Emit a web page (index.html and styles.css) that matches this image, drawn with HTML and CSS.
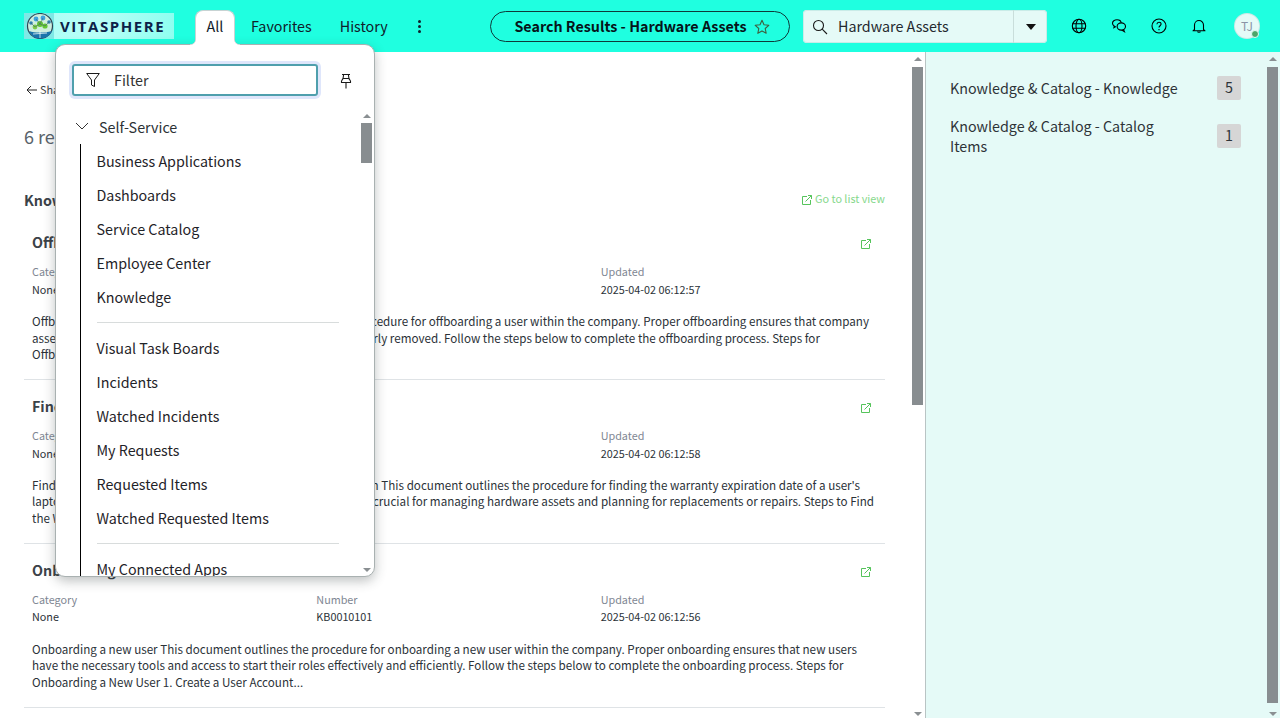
FILE: index.html
```html
<!DOCTYPE html>
<html lang="en">
<head>
<meta charset="utf-8">
<title>Search Results - Hardware Assets</title>
<link rel="stylesheet" href="styles.css">
</head>
<body>
<div class="app">
  <header class="topbar">
    <div class="logo">
      <svg class="logo-mark" width="30" height="26" viewBox="0 0 30 26">
        <rect width="30" height="26" fill="#7fe9e6"/>
        <circle cx="16" cy="13" r="12.5" fill="#cfeede" stroke="#2b4654" stroke-width="1.2"/>
        <path d="M5 18c6 2 15 2 23 0-2 5-7 7.500-12 7.500S7 23 5 18z" fill="#1a74ab"/>
        <path d="M16 18v7M9 21l14-1" stroke="#e8f6f8" stroke-width=".8"/>
        <circle cx="16" cy="11" r="3" fill="#63c734"/>
        <circle cx="21" cy="13" r="2.600" fill="#63c734"/>
        <circle cx="11" cy="14" r="2.400" fill="#7ccc45"/>
        <circle cx="12" cy="6" r="2.400" fill="#3ea3dd"/>
        <circle cx="19" cy="5" r="2.400" fill="#3ea3dd"/>
        <circle cx="7" cy="10" r="1.800" fill="#2f80b0"/>
        <circle cx="25" cy="9" r="1.800" fill="#2f80b0"/>
        <path d="M12 6l4 5 3-6M7 10l4 4 5-3 5 2 4-4" stroke="#45616c" stroke-width=".6" fill="none"/>
      </svg>
      <span class="logo-text">VITASPHERE</span>
    </div>
    <nav class="tabs">
      <a class="tab tab-active">All</a>
      <a class="tab">Favorites</a>
      <a class="tab">History</a>
      <span class="more"><i></i><i></i><i></i></span>
    </nav>
    <div class="pill">
      <span class="pill-text">Search Results - Hardware Assets</span>
      <svg width="16" height="16" viewBox="0 0 16 16"><path d="M8 1.300l2 4.500 4.800.5-3.600 3.200 1 4.800L8 11.900l-4.200 2.400 1-4.800L1.200 6.300 6 5.800z" fill="none" stroke="#3f5f3f" stroke-width="1.100" stroke-linejoin="round"/></svg>
    </div>
    <div class="search">
      <div class="search-field">
        <svg width="16" height="16" viewBox="0 0 16 16"><circle cx="6.500" cy="6.500" r="5" fill="none" stroke="#1a1a1a" stroke-width="1.100"/><path d="M10.200 10.200l4.800 4.800" stroke="#1a1a1a" stroke-width="1.100"/></svg>
        <span class="search-text">Hardware Assets</span>
      </div>
      <div class="search-caret"><b></b></div>
    </div>
    <div class="actions">
      <svg class="action" width="16" height="16" viewBox="0 0 16 16" fill="none" stroke="#000" stroke-width="1.100"><circle cx="8" cy="8" r="6.700"/><ellipse cx="8" cy="8" rx="3" ry="6.700"/><path d="M1.500 5.700h13M1.500 10.300h13"/></svg>
      <svg class="action" width="16" height="16" viewBox="0 0 16 16" fill="none" stroke="#000" stroke-width="1.100"><path d="M6 1.700c-2.500 0-4.500 1.500-4.500 3.500 0 1.200.7 2.200 1.700 2.800l-.3 1.700 2-1.100"/><path d="M6 1.700c2.300 0 4 1.300 4.200 3"/><ellipse cx="10.300" cy="8.500" rx="4.200" ry="3.600"/><path d="M12.500 11.500l.9 2.200-2.700-1.600"/></svg>
      <svg class="action" width="16" height="16" viewBox="0 0 16 16" fill="none" stroke="#000" stroke-width="1.100"><circle cx="8" cy="8" r="7"/><path d="M5.900 6.200C6 4.900 6.900 4.200 8 4.200c1.200 0 2.100.8 2.100 1.900 0 1.700-2.100 1.700-2.100 3.500"/><path d="M8 11v1.200"/></svg>
      <svg class="action" width="16" height="16" viewBox="0 0 16 16" fill="none" stroke="#000" stroke-width="1.100"><path d="M3.500 11.500V7a4.500 4.500 0 0 1 9 0v4.500l1.500 1.300H2z" stroke-linejoin="round"/><path d="M6.500 13.500c.3 1 2.700 1 3 0"/></svg>
      <div class="avatar">TJ<span class="status"></span></div>
    </div>
  </header>

  <div class="body">
    <main class="main">
      <div class="content">
        <a class="back">
          <svg width="11" height="10" viewBox="0 0 11 10" fill="none" stroke="#222" stroke-width="1"><path d="M11 5H1M5 1L1 5l4 4"/></svg>
          <span>Shared</span>
        </a>
        <h1 class="count">6 results</h1>
        <div class="group-head">
          <h2 class="group-title">Knowledge</h2>
          <a class="list-link">
            <svg class="ext" width="10" height="10" viewBox="0 0 10 10" fill="none" stroke="#56c45c"><path d="M5 1.500H.5v8h8V5M3.500 6.500L9.500.5M6 .5h3.500V4"/></svg>
            Go to list view
          </a>
        </div>

        <article class="card">
          <div class="card-head">
            <h3 class="card-title">Offboarding a User</h3>
            <svg class="ext" width="10" height="10" viewBox="0 0 10 10" fill="none" stroke="#56c45c"><path d="M5 1.500H.5v8h8V5M3.500 6.500L9.500.5M6 .5h3.500V4"/></svg>
          </div>
          <dl class="meta">
            <div><dt>Category</dt><dd>None</dd></div>
            <div><dt>Number</dt><dd>KB0010099</dd></div>
            <div><dt>Updated</dt><dd>2025-04-02 06:12:57</dd></div>
          </dl>
          <p class="desc">Offboarding a user at company This document outlines the procedure for offboarding a user within the company. Proper offboarding ensures that company<br>assets are recovered and that all system access rights are properly removed. Follow the steps below to complete the offboarding process. Steps for<br>Offboarding a User 1. Disable Account...</p>
        </article>

        <article class="card">
          <div class="card-head">
            <h3 class="card-title">Finding Warranty Expiration</h3>
            <svg class="ext" width="10" height="10" viewBox="0 0 10 10" fill="none" stroke="#56c45c"><path d="M5 1.500H.5v8h8V5M3.500 6.500L9.500.5M6 .5h3.500V4"/></svg>
          </div>
          <dl class="meta">
            <div><dt>Category</dt><dd>None</dd></div>
            <div><dt>Number</dt><dd>KB0010100</dd></div>
            <div><dt>Updated</dt><dd>2025-04-02 06:12:58</dd></div>
          </dl>
          <p class="desc">Finding the warranty date of a user's laptop and all its expiration This document outlines the procedure for finding the warranty expiration date of a user's<br>laptop within the company. Knowing the due expiration date is crucial for managing hardware assets and planning for replacements or repairs. Steps to Find<br>the Warranty Expiration Date 1. Open the Asset...</p>
        </article>

        <article class="card">
          <div class="card-head">
            <h3 class="card-title">Onboarding a New User</h3>
            <svg class="ext" width="10" height="10" viewBox="0 0 10 10" fill="none" stroke="#56c45c"><path d="M5 1.500H.5v8h8V5M3.500 6.500L9.500.5M6 .5h3.500V4"/></svg>
          </div>
          <dl class="meta">
            <div><dt>Category</dt><dd>None</dd></div>
            <div><dt>Number</dt><dd>KB0010101</dd></div>
            <div><dt>Updated</dt><dd>2025-04-02 06:12:56</dd></div>
          </dl>
          <p class="desc">Onboarding a new user This document outlines the procedure for onboarding a new user within the company. Proper onboarding ensures that new users<br>have the necessary tools and access to start their roles effectively and efficiently. Follow the steps below to complete the onboarding process. Steps for<br>Onboarding a New User 1. Create a User Account...</p>
        </article>
      </div>
      <div class="scrollbar scrollbar-main">
        <span class="arrow arrow-up"></span>
        <span class="thumb"></span>
        <span class="track"></span>
        <span class="arrow arrow-down"></span>
      </div>
    </main>

    <aside class="facets">
      <div class="facet-list">
        <div class="facet facet-one"><span>Knowledge &amp; Catalog - Knowledge</span><b class="badge">5</b></div>
        <div class="facet"><span>Knowledge &amp; Catalog - Catalog Items</span><b class="badge">1</b></div>
      </div>
      <div class="scrollbar scrollbar-side">
        <span class="arrow arrow-up"></span>
        <span class="thumb"></span>
        <span class="arrow arrow-down"></span>
      </div>
    </aside>
  </div>

  <div class="menu">
    <div class="menu-top">
      <div class="filter">
        <svg width="14" height="16" viewBox="0 0 14 16" fill="none" stroke="#1a1a1a" stroke-width="1"><path d="M.7 1.500h12.600L8.500 8v6.500L5.500 13V8z" stroke-linejoin="round"/></svg>
        <span class="filter-text">Filter</span>
      </div>
      <svg class="pin" width="12" height="16" viewBox="0 0 12 16" fill="none" stroke="#1a1a1a" stroke-width="1.100"><path d="M2 1.500h8M3.500 1.500c0 3 .3 4-2 6.500v1.500h9V8c-2.300-2.500-2-3.500-2-6.500"/><path d="M3 5.500h6M6 9.500v6"/></svg>
    </div>
    <div class="menu-body">
      <div class="menu-list">
        <div class="section">
          <svg width="14" height="8" viewBox="0 0 14 8" fill="none" stroke="#333" stroke-width="1"><path d="M1 1l6 6 6-6"/></svg>
          <span>Self-Service</span>
        </div>
        <ul class="items">
          <li>Business Applications</li>
          <li>Dashboards</li>
          <li>Service Catalog</li>
          <li>Employee Center</li>
          <li>Knowledge</li>
          <li class="sep"></li>
          <li>Visual Task Boards</li>
          <li>Incidents</li>
          <li>Watched Incidents</li>
          <li>My Requests</li>
          <li>Requested Items</li>
          <li>Watched Requested Items</li>
          <li class="sep"></li>
          <li>My Connected Apps</li>
        </ul>
      </div>
      <div class="scrollbar scrollbar-menu">
        <span class="arrow arrow-up"></span>
        <span class="thumb"></span>
        <span class="track"></span>
        <span class="arrow arrow-down"></span>
      </div>
    </div>
  </div>
</div>
</body>
</html>
```

FILE: styles.css
```css
* { box-sizing: border-box; }
html, body { margin: 0; height: 100%; overflow: hidden; background: #fff; }
body { font-family: "Noto Sans CJK SC", "Noto Sans", sans-serif; color: #1f2328; }
h1, h2, h3, p, dl, dd, ul { margin: 0; padding: 0; }
.app { position: relative; width: 1280px; height: 718px; display: flex; flex-direction: column; }

/* top bar */
.topbar { height: 52px; flex: none; background: #1fffe0; display: flex; align-items: flex-start; }
.logo { margin: 13px 0 0 24px; width: 150px; height: 26px; display: flex; align-items: center; background: linear-gradient(90deg, #a9fff6 0%, #b8fff7 50%, #8efff0 100%); }
.logo-mark { flex: none; display: block; }
.logo-text { margin-left: 6px; font-family: "Open Sans", sans-serif; font-weight: 700; font-size: 15px; line-height: 20px; letter-spacing: 1.55px; color: #0c2148; }
.tabs { margin: 10px 0 0 21px; display: flex; align-items: flex-start; width: 295px; }
.tab { height: 34px; padding: 0 14px; font-size: 14.3px; line-height: 32px; color: #10202a; }
.tab-active { position: relative; z-index: 3; width: 40px; height: 35px; margin-right: 2px; padding: 0; text-align: center; line-height: 30px; background: #fff; border: 1px solid #c7d3d3; border-bottom: 0; border-radius: 8px 8px 0 0; }
.tab-active::before, .tab-active::after { content: ""; position: absolute; bottom: 0; width: 6px; height: 6px; }
.tab-active::before { left: -6px; background: radial-gradient(circle at 0 0, transparent 5px, #c7d3d3 5.500px, #fff 6.500px); }
.tab-active::after { right: -6px; background: radial-gradient(circle at 100% 0, transparent 5px, #c7d3d3 5.500px, #fff 6.500px); }
.more { margin: 1px 0 0 8px; height: 30px; width: 20px; display: flex; flex-direction: column; align-items: center; justify-content: center; gap: 2px; }
.more i { width: 3px; height: 3px; border-radius: 50%; background: #10202a; }
.pill { margin-top: 11px; padding-left: 4px; width: 300px; height: 31px; flex: none; border: 1px solid #0e3a3a; border-radius: 16px; display: flex; align-items: center; justify-content: center; gap: 7px; font-size: 14.3px; font-weight: 700; color: #06141a; }
.pill svg { flex: none; }
.pill-text { margin-top: -2px; }
.search { margin: 10px 0 0 13px; width: 244px; height: 33px; flex: none; display: flex; background: #e5faf7; border-radius: 4px; box-shadow: 0 0 0 1px #c9ece8 inset; }
.search-field { flex: 1; display: flex; align-items: center; gap: 10px; padding-left: 9px; font-size: 14.3px; color: #24292e; }
.search-text { margin-top: -2px; }
.search-caret { width: 34px; border-left: 1px solid #c9dedb; display: flex; align-items: center; justify-content: center; }
.search-caret b { width: 0; height: 0; border-left: 5px solid transparent; border-right: 5px solid transparent; border-top: 6px solid #111; }
.actions { margin: 9px 0 0 24px; display: flex; align-items: center; height: 33px; }
.action { margin-right: 24px; flex: none; }
.avatar { position: relative; margin-left: 4px; width: 24px; height: 24px; border-radius: 50%; background: #e5faf7; box-shadow: 0 0 0 1px #cfe9e6; color: #8a94a6; font-size: 12px; line-height: 23px; text-align: center; }
.status { position: absolute; right: 0; bottom: 0; width: 8px; height: 8px; border-radius: 50%; background: #4ca56a; border: 1px solid #e5faf7; }

/* body */
.body { flex: 1; min-height: 0; display: flex; }
.main { width: 925px; flex: none; display: flex; overflow: hidden; }
.content { width: 885px; padding: 28px 0 0 24px; flex: none; }
.back { display: flex; align-items: center; gap: 3px; height: 18px; padding-left: 2px; font-size: 10.8px; color: #3a4248; margin: 0; }
.back svg { margin-top: 2px; }
.back span { margin-top: -1px; }
.count { margin-top: 24px; margin-bottom: 38px; font-size: 18px; font-weight: 400; line-height: 28px; color: #59636b; }
.group-head { margin-bottom: 4.250px; height: 24px; display: flex; align-items: center; justify-content: space-between; }
.group-title { font-size: 14.3px; font-weight: 700; line-height: 24px; color: #3b4248; }
.list-link { display: flex; align-items: center; gap: 3px; font-size: 10.8px; color: #86d88c; margin-top: -5px; }
.list-link .ext { transform: translateY(2px); }
.ext { flex: none; display: block; }
.card-head .ext { transform: translateY(2px); }
.card { height: 163.750px; padding: 14px 0 0 8px; border-bottom: 1px solid #dfe3e6; }
.card-head { height: 24px; padding-right: 14px; display: flex; align-items: center; justify-content: space-between; }
.card-title { font-size: 14.3px; font-weight: 700; line-height: 24px; color: #3b4248; }
.meta { margin-top: 9px; display: grid; grid-template-columns: repeat(3, 1fr); }
.meta dt { font-size: 10.8px; line-height: 17.5px; color: #7f8793; }
.meta dd { font-size: 10.8px; line-height: 17.5px; color: #2b3238; }
.desc { margin-top: 14.750px; padding-right: 8px; font-size: 11.65px; line-height: 16.5px; color: #2b3238; white-space: nowrap; overflow: hidden; }

/* scrollbars */
.scrollbar { flex: none; width: 11px; display: flex; flex-direction: column; align-items: stretch; }
.scrollbar-main { margin-left: 27px; }
.scrollbar-side { margin-left: auto; margin-right: 2px; }
.arrow { flex: none; height: 15px; position: relative; }
.arrow::after { content: ""; position: absolute; left: 2px; width: 0; height: 0; border-left: 4px solid transparent; border-right: 4px solid transparent; }
.arrow-up::after { top: 5px; border-bottom: 4px solid #8a8f92; }
.arrow-down::after { bottom: 2px; border-top: 4px solid #8a8f92; }
.thumb { background: #888d90; }
.track { flex: 1; }
.scrollbar-main .thumb { height: 338px; }
.scrollbar-side .thumb { flex: 1; }

/* facets */
.facets { flex: 1; display: flex; background: #e5faf7; border-left: 1px solid #b9c4c4; }
.facet-list { width: 315px; padding: 24px 0 0 24px; flex: none; }
.facet { display: flex; justify-content: space-between; align-items: center; font-size: 14.3px; line-height: 20px; color: #2e3338; }
.facet span { width: 232px; }
.facet-one { margin-bottom: 16px; }
.badge { width: 24px; height: 24px; flex: none; background: #d6d6d6; border-radius: 2px; font-weight: 400; text-align: center; line-height: 22px; color: #2e3338; }

/* menu */
.menu { position: absolute; z-index: 2; left: 55px; top: 44px; width: 320px; height: 533px; background: #fff; border: 1px solid #a9b1b1; border-radius: 10px; box-shadow: 0 4px 12px rgba(40, 50, 50, .3); display: flex; flex-direction: column; overflow: hidden; }
.menu-top { height: 63px; flex: none; padding: 19px 0 0 16px; display: flex; align-items: flex-start; }
.filter { width: 246px; height: 32px; border: 2px solid #4f9fad; border-radius: 3px; box-shadow: 0 0 0 3px #dfe6fb; display: flex; align-items: center; gap: 14px; padding-left: 12px; font-size: 14.3px; color: #333; }
.filter-text { margin-top: -2px; }
.pin { margin: 9px 0 0 22px; }
.menu-body { flex: 1; min-height: 0; display: flex; overflow: hidden; }
.menu-list { width: 305px; flex: none; overflow: hidden; }
.section { height: 36px; padding: 0 0 0 19px; display: flex; align-items: center; gap: 10px; font-size: 14.3px; color: #2c3236; }
.items { list-style: none; margin: 0 0 0 24px; padding: 0 0 0 15.500px; border-left: 1px solid #000; height: 460px; overflow: hidden; }
.items li { height: 34px; font-size: 14.3px; line-height: 34px; color: #1f2328; white-space: nowrap; }
.items .sep { height: 1px; margin: 8px 0 8px .500px; width: 242px; background: #d8dcdc; }
.scrollbar-menu { width: 11px; margin-top: 1px; }
.scrollbar-menu .arrow { height: 14px; }
.scrollbar-menu .thumb { height: 40px; }
.scrollbar-menu .arrow-down::after { bottom: 4px; }
```
